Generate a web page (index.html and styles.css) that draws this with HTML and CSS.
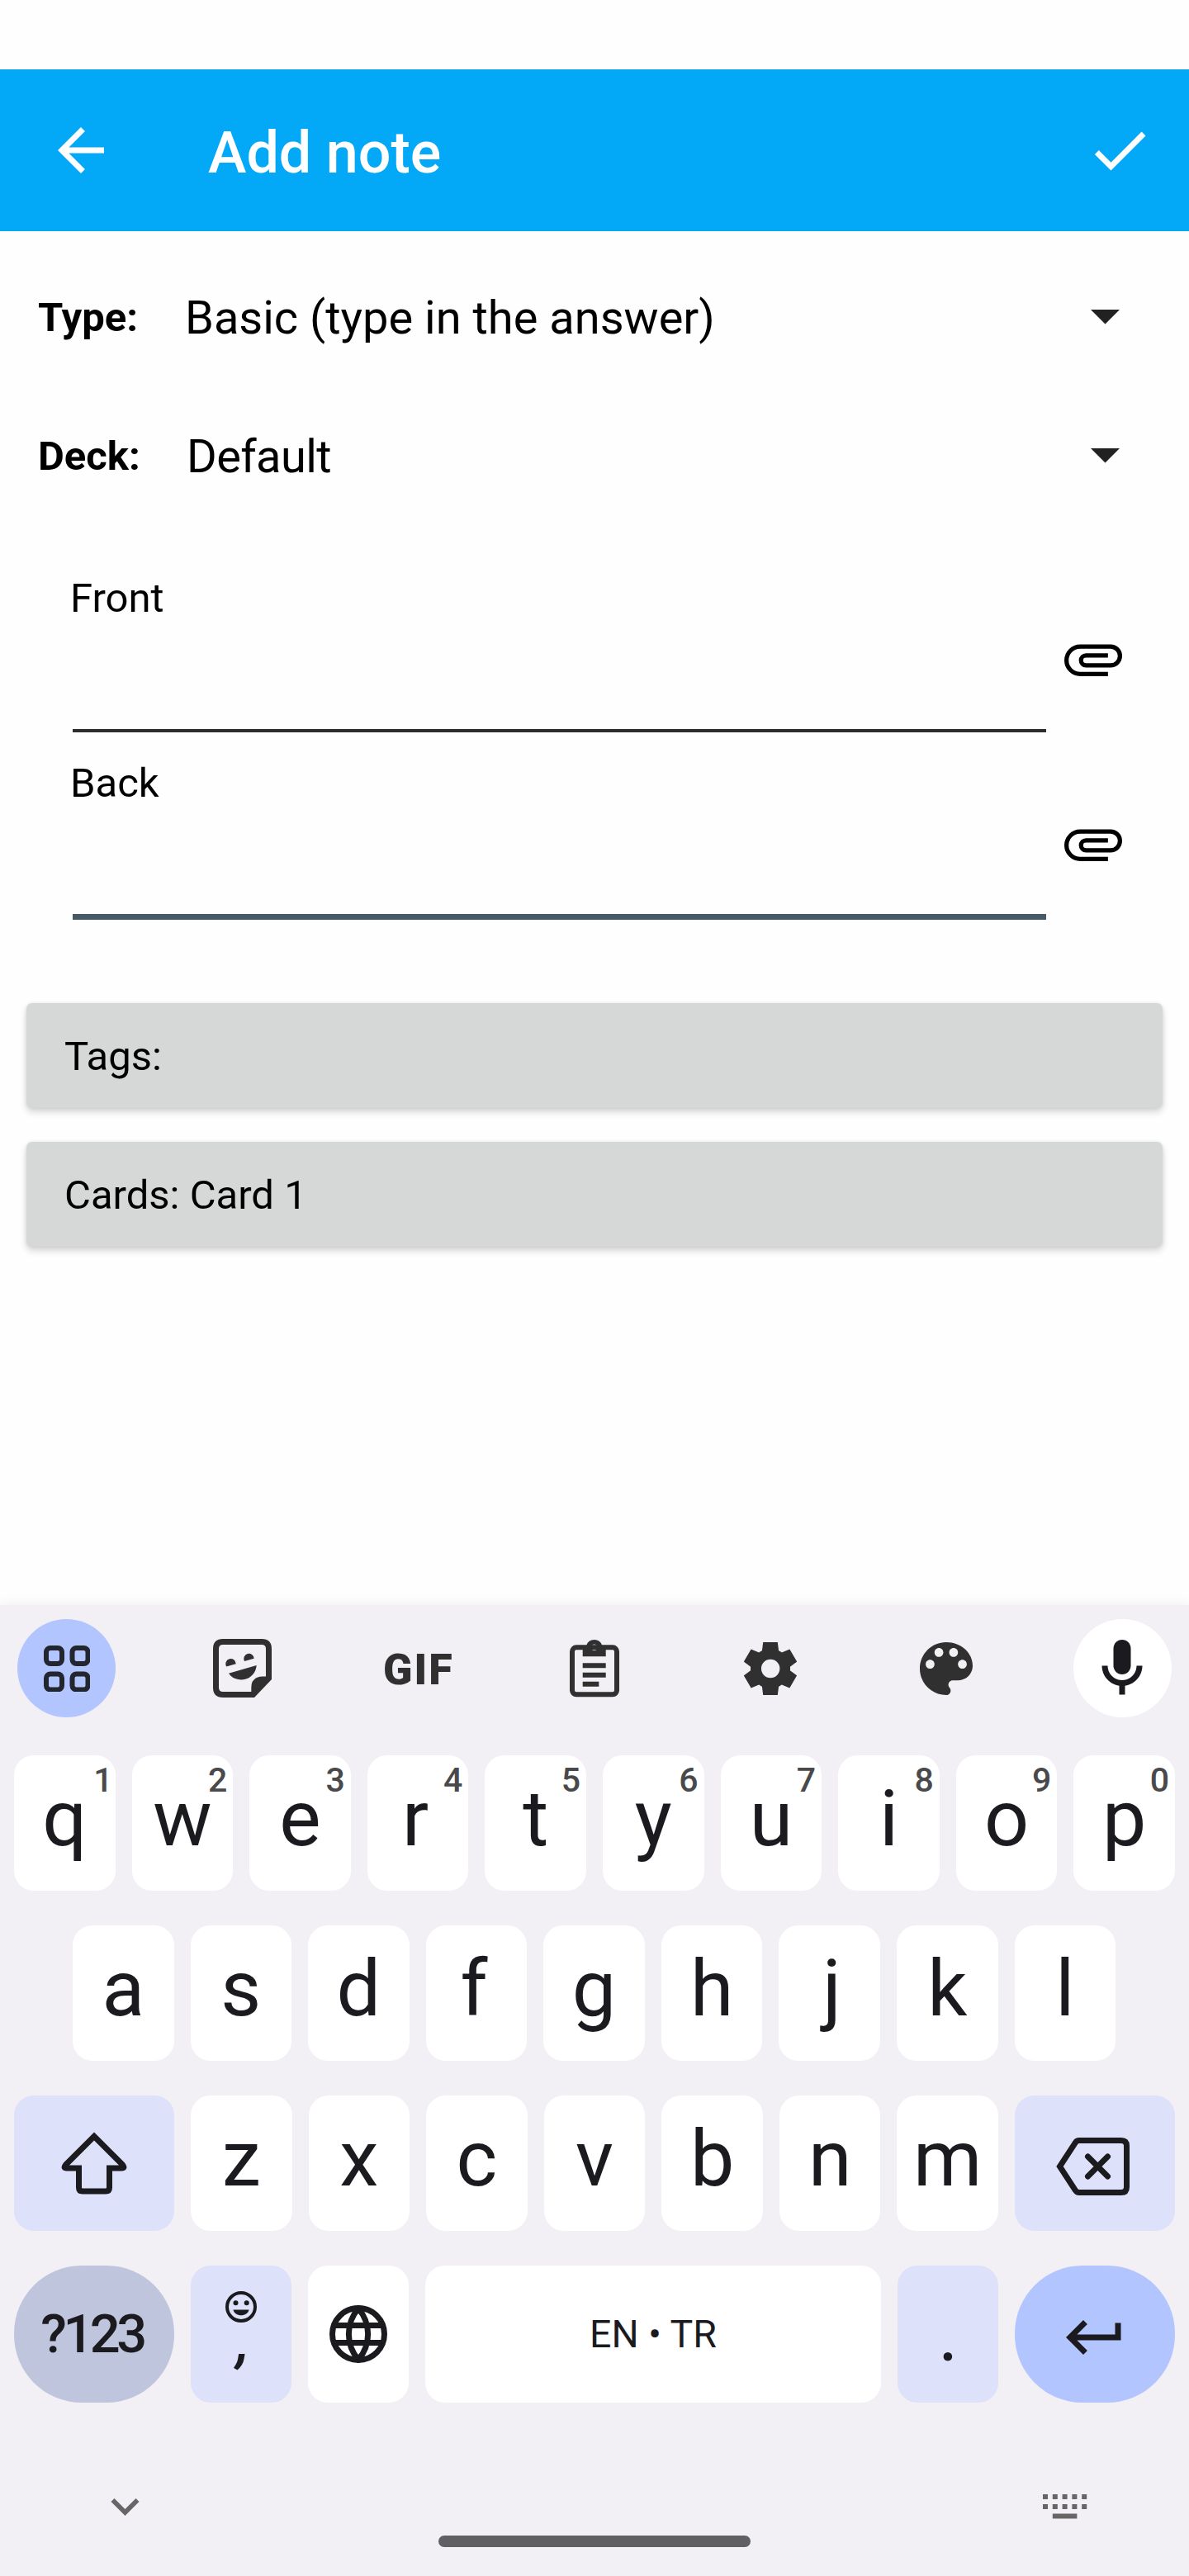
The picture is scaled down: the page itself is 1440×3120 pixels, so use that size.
FILE: index.html
```html
<!DOCTYPE html>
<html lang="en">
<head>
<meta charset="utf-8">
<title>Add note</title>
<link rel="stylesheet" href="styles.css">
</head>
<body>
<div class="screen">
  <header class="appbar">
    <svg class="icon back" viewBox="0 0 24 24"><path d="M20 11H7.83l5.59-5.59L12 4l-8 8 8 8 1.41-1.41L7.83 13H20z"/></svg>
    <h1 class="title">Add note</h1>
    <svg class="icon" viewBox="0 0 24 24"><path d="M9 16.2 4.8 12l-1.4 1.4L9 19 21 7l-1.4-1.4z"/></svg>
  </header>

  <main class="form">
    <div class="select-row">
      <span class="select-label">Type:</span>
      <span class="select-value">Basic (type in the answer)</span>
      <svg class="caret" viewBox="0 0 35 18"><path d="M0 0h35L17.5 17.5z"/></svg>
    </div>
    <div class="select-row deck">
      <span class="select-label">Deck:</span>
      <span class="select-value">Default</span>
      <svg class="caret" viewBox="0 0 35 18"><path d="M0 0h35L17.5 17.5z"/></svg>
    </div>

    <div class="fields">
      <div class="field">
        <div class="field-main"><span class="field-label">Front</span><div class="field-input"></div></div>
        <svg class="icon clip" viewBox="0 0 24 24"><path d="M17.100 17.250H7.500A4.750 4.750 0 0 1 7.500 7.750H18A3.250 3.250 0 0 1 18 14.250H9.500A1.725 1.725 0 0 1 9.500 10.800H17.100"/></svg>
      </div>
      <div class="field focused">
        <div class="field-main"><span class="field-label">Back</span><div class="field-input"></div></div>
        <svg class="icon clip" viewBox="0 0 24 24"><path d="M17.100 17.250H7.500A4.750 4.750 0 0 1 7.500 7.750H18A3.250 3.250 0 0 1 18 14.250H9.500A1.725 1.725 0 0 1 9.500 10.800H17.100"/></svg>
      </div>
    </div>

    <div class="buttons">
      <div class="button">Tags:</div>
      <div class="button">Cards: Card 1</div>
    </div>
  </main>

  <section class="keyboard">
    <div class="toolbar">
      <div class="tool tool-active">
        <svg width="56" height="56" viewBox="0 0 56 56" fill="none" stroke="#23252f" stroke-width="6"><rect x="3" y="3" width="19" height="19" rx="5"/><rect x="34.500" y="3" width="19" height="19" rx="5"/><rect x="3" y="34.500" width="19" height="19" rx="5"/><rect x="34.500" y="34.500" width="19" height="19" rx="5"/></svg>
      </div>
      <div class="tool">
        <svg width="71" height="71" viewBox="0 0 71 71"><path d="M67.500 47V12q0-8.500-8.500-8.500H12q-8.500 0-8.500 8.500v47q0 8.500 8.500 8.500H48" fill="none" stroke="#303030" stroke-width="7"/><path d="M71 49V45.500H60Q46.300 46 46.300 59V71H50z"/><path d="M16.300 33.500A6.200 6.200 0 1 1 27.700 30.300zM38 26.900A6.200 6.200 0 1 1 49.700 23.700zM19 41.700 52.700 32C52 43 43 49.500 34.500 49.500 28 49.500 22 46.500 19 41.700z"/></svg>
      </div>
      <div class="tool"><span class="gif">GIF</span></div>
      <div class="tool">
        <svg width="60" height="71" viewBox="0 0 60 71"><rect x="3" y="10.300" width="54" height="57" rx="5" fill="none" stroke="#303030" stroke-width="6"/><path fill-rule="evenodd" d="M15.700 8h4.500a10 10 0 0 1 19 0h4.500v13.300h-28zM29.700 6.600a3.700 3.700 0 1 0 .01 0z"/><path d="M15.700 29.300h28v6h-28zM15.700 40.700h28v6h-28zM15.700 51.800h19.600v6H15.700z"/></svg>
      </div>
      <div class="tool">
        <svg width="64" height="64" viewBox="2 2 20 20"><path d="m9.250 22-.4-3.200q-.325-.125-.612-.3-.288-.175-.563-.375L4.700 19.375l-2.750-4.750 2.575-1.950Q4.500 12.500 4.500 12.337v-.675q0-.162.025-.337L1.950 9.375l2.750-4.750 2.975 1.250q.275-.2.575-.375.3-.175.6-.3l.4-3.200h5.500l.4 3.200q.325.125.613.3.287.175.562.375l2.975-1.250 2.750 4.750-2.575 1.950q.025.175.025.337v.675q0 .163-.05.338l2.575 1.950-2.750 4.750-2.950-1.250q-.275.2-.575.375-.3.175-.6.3l-.4 3.200Zm2.800-6.500q1.450 0 2.475-1.025Q15.550 13.450 15.550 12q0-1.450-1.025-2.475Q13.500 8.500 12.050 8.500q-1.475 0-2.488 1.025Q8.550 10.550 8.550 12q0 1.450 1.012 2.475Q10.575 15.500 12.050 15.500Z"/></svg>
      </div>
      <div class="tool">
        <svg width="64" height="64" viewBox="3 3 18 18"><path d="M12 3c-4.970 0-9 4.030-9 9s4.030 9 9 9c.83 0 1.500-.67 1.500-1.500 0-.39-.15-.74-.39-1.010-.23-.26-.38-.61-.38-.99 0-.83.67-1.500 1.500-1.500H16c2.760 0 5-2.240 5-5 0-4.420-4.030-8-9-8zm-5.500 9c-.83 0-1.500-.67-1.500-1.500S5.670 9 6.500 9 8 9.670 8 10.500 7.330 12 6.500 12zm3-4C8.670 8 8 7.330 8 6.500S8.670 5 9.500 5s1.500.67 1.500 1.500S10.330 8 9.500 8zm5 0c-.83 0-1.500-.67-1.500-1.500S13.670 5 14.500 5s1.500.67 1.500 1.500S15.330 8 14.500 8zm3 4c-.83 0-1.500-.67-1.500-1.500S16.670 9 17.500 9s1.500.67 1.500 1.500-.67 1.500-1.500 1.500z"/></svg>
      </div>
      <div class="tool tool-mic">
        <svg width="84" height="84" viewBox="0 0 24 24"><path d="M12 14c1.660 0 3-1.340 3-3V5c0-1.660-1.340-3-3-3S9 3.340 9 5v6c0 1.660 1.340 3 3 3z"/><path d="M17 11c0 2.760-2.240 5-5 5s-5-2.240-5-5H5c0 3.530 2.610 6.430 6 6.920V21h2v-3.080c3.390-.49 6-3.390 6-6.920z"/></svg>
      </div>
    </div>

    <div class="rows">
      <div class="row">
        <div class="key">q<span class="hint hint-one">1</span></div>
        <div class="key">w<span class="hint">2</span></div>
        <div class="key">e<span class="hint">3</span></div>
        <div class="key key-left">r<span class="hint">4</span></div>
        <div class="key">t<span class="hint">5</span></div>
        <div class="key">y<span class="hint">6</span></div>
        <div class="key">u<span class="hint">7</span></div>
        <div class="key">i<span class="hint">8</span></div>
        <div class="key">o<span class="hint">9</span></div>
        <div class="key">p<span class="hint">0</span></div>
      </div>
      <div class="row row-inset">
        <div class="key">a</div><div class="key">s</div><div class="key">d</div><div class="key key-left">f</div><div class="key">g</div><div class="key">h</div><div class="key key-right">j</div><div class="key">k</div><div class="key">l</div>
      </div>
      <div class="row">
        <div class="key key-soft key-wide">
          <svg class="shift" width="80" height="76" viewBox="0 0 80 76" fill="none" stroke="#1b1b1f" stroke-width="7"><path d="M40 5.500 5.500 40Q2 44 7 44H21.500V67.500Q21.500 72 26 72H54Q58.500 72 58.500 67.500V44H73Q78 44 74.500 40z"/></svg>
        </div>
        <div class="key">z</div><div class="key">x</div><div class="key">c</div><div class="key">v</div><div class="key">b</div><div class="key">n</div><div class="key">m</div>
        <div class="key key-soft key-wide">
          <svg class="bksp" width="90" height="70" viewBox="0 0 90 70" fill="none" stroke="#1b1b1f" stroke-width="7"><path d="M4.500 35 23.500 6Q25 3.500 28 3.500H79Q85.500 3.500 85.500 10V60Q85.500 66.500 79 66.500H28Q25 66.500 23.500 64z"/><path d="M38.500 23 62.500 47M62.500 23 38.500 47" stroke-linecap="round"/></svg>
        </div>
      </div>
      <div class="row row-last">
        <div class="key key-symbols key-wide">?123</div>
        <div class="key key-soft key-comma">
          <svg width="38" height="38" viewBox="0 0 38 38"><circle cx="19" cy="19" r="17" fill="none" stroke="#1b1b1f" stroke-width="4"/><circle cx="12.500" cy="14.200" r="3"/><circle cx="25.700" cy="14.200" r="3"/><path d="M9.500 22.500h19c-1.500 9-17.500 9-19 0z"/></svg>
          <span class="comma">,</span>
        </div>
        <div class="key key-globe">
          <svg width="70" height="70" viewBox="0 0 70 70" fill="none" stroke="#1b1b1f" stroke-width="7"><circle cx="35" cy="35" r="31.500"/><path d="M5 24.500H65M5 45.500H65M35 4C19.500 22 19.500 48 35 66C50.500 48 50.500 22 35 4z"/></svg>
        </div>
        <div class="key key-space">EN • TR</div>
        <div class="key key-soft key-period">.</div>
        <div class="key key-enter key-wide">
          <svg class="enter" width="84" height="84" viewBox="0 0 24 24"><path d="M19 7v4H5.830l3.580-3.590L8 6l-6 6 6 6 1.410-1.410L5.830 13H21V7z"/></svg>
        </div>
      </div>
    </div>

    <div class="navbar">
      <svg class="hide" width="35" height="21" viewBox="6 8.590 12 7.410"><path d="M16.590 8.590 12 13.170 7.410 8.590 6 10l6 6 6-6z"/></svg>
      <div class="handle"></div>
      <svg class="switch" width="54" height="30" viewBox="0 0 54 30"><path d="M0 0h6v6H0zM11.800 0h6v6h-6zM23.600 0h6v6h-6zM35.400 0h6v6h-6zM47.200 0h6v6h-6zM0 12h6v6H0zM11.800 12h6v6h-6zM23.600 12h6v6h-6zM35.400 12h6v6h-6zM47.200 12h6v6h-6zM11.800 23.600h29.600v6H11.800z"/></svg>
    </div>
  </section>
</div>
</body>
</html>
```
FILE: styles.css
```css
* { box-sizing: border-box; }

body {
  margin: 0;
  background: #fff;
  font-family: Roboto, "Liberation Sans", sans-serif;
  color: #000;
}

svg { display: block; flex: none; }

.screen {
  display: flex;
  flex-direction: column;
  width: 1440px;
  height: 3120px;
  padding-top: 84px;
  background: #fefefe;
  overflow: hidden;
}

.icon { width: 84px; height: 84px; }

/* App bar */
.appbar {
  display: flex;
  align-items: center;
  height: 196px;
  padding: 0 42px 0 56px;
  background: #03a9f7;
  fill: #fff;
  color: #fff;
}
.title {
  flex: 1;
  margin: 0;
  padding: 6px 0 0 112px;
  font-size: 70px;
  font-weight: 500;
  line-height: 84px;
}

/* Form */
.form { padding-top: 20px; }
.select-row {
  display: flex;
  align-items: center;
  height: 168px;
  padding: 0 84px 0 46px;
}
.select-label {
  width: 178px;
  font-size: 49px;
  font-weight: 700;
}
.select-value { flex: 1; padding-top: 2px; font-size: 56px; }
.deck .select-label { width: 180px; }
.deck .select-value { letter-spacing: -.6px; }
.caret { width: 35px; height: 18px; fill: #212121; }

.fields { padding: 60px 0 0 88px; }
.field { display: flex; gap: 15px; height: 224px; }
.field-main { width: 1179px; }
.field-label {
  display: block;
  margin-left: -3px;
  font-size: 49px;
  line-height: 58px;
}
.field-input {
  height: 133px;
  border-bottom: 4px solid #2e2e2e;
}
.focused .field-input { height: 136px; border-bottom: 7px solid #455a64; }
.clip {
  margin-top: 60px;
  fill: none;
  stroke: #000;
  stroke-width: 1.5;
}

.buttons {
  display: flex;
  flex-direction: column;
  gap: 41px;
  padding: 71px 32px 0;
}
.button {
  height: 127px;
  padding: 3px 0 0 46px;
  border-radius: 7px;
  background: #d6d8d7;
  box-shadow: 0 5px 9px rgba(0, 0, 0, .16), 0 0 5px rgba(0, 0, 0, .08);
  font-size: 49px;
  line-height: 124px;
}

/* Keyboard */
.keyboard {
  display: flex;
  flex-direction: column;
  height: 1176px;
  margin-top: auto;
  padding-top: 17px;
  background: #f2f0f5;
  box-shadow: 0 0 14px rgba(0, 0, 0, .08);
  color: #1b1b1f;
  fill: #1b1b1f;
}
.toolbar {
  display: flex;
  justify-content: space-between;
  padding: 0 21px;
  fill: #303030;
}
.tool {
  display: flex;
  align-items: center;
  justify-content: center;
  width: 119px;
  height: 119px;
  border-radius: 50%;
}
.tool-active { background: #b2c5ff; }
.tool-mic { background: #fff; fill: #1b1b1f; }
.gif {
  padding-top: 3px;
  color: #303030;
  font-size: 52px;
  font-weight: 900;
  letter-spacing: 2px;
}

.rows {
  display: flex;
  flex-direction: column;
  gap: 42px;
  padding: 46px 17px 0;
}
.row { display: flex; gap: 20px; height: 164px; }
.row-last { height: 166px; }
.row-inset { padding: 0 72px 0 71px; }
.key {
  position: relative;
  display: flex;
  flex: 1 1 0;
  align-items: center;
  justify-content: center;
  padding-bottom: 11px;
  border-radius: 24px;
  background: #fff;
  font-size: 95px;
  line-height: 1;
}
.key-left { text-indent: -6px; }
.key-right { text-indent: 6px; }
.hint {
  position: absolute;
  top: 6px;
  right: 7px;
  color: #49494b;
  font-size: 41px;
  font-weight: 500;
  line-height: 48px;
  text-indent: 0;
}
.hint-one { right: 3px; }
.key-soft { background: #dde1f9; }
.key-wide { flex: none; width: 194px; padding: 0; }
.shift { margin-top: -1px; }
.bksp { margin: 7px 0 0 -4px; }
.key-symbols {
  padding-right: 5px;
  border-radius: 82px;
  background: #c0c5de;
  font-size: 65px;
  font-weight: 500;
  letter-spacing: -4.5px;
}
.key-comma {
  flex-direction: column;
  justify-content: flex-start;
  padding: 31px 0 0;
}
.comma {
  margin: -11px 0 0 5px;
  font-size: 68px;
  font-style: italic;
  font-weight: 600;
}
.key-globe { padding: 0; }
.key-space { flex: none; width: 552px; padding: 0; font-size: 46.5px; }
.key-period { padding: 0; font-family: Lato, sans-serif; font-size: 84px; }
.key-enter { border-radius: 82px; background: #b2c5ff; }
.enter { margin-top: 8px; }

.navbar {
  display: flex;
  justify-content: space-between;
  padding: 111px 123px 0 134px;
  fill: #666;
}
.hide { margin-top: 5px; }
.handle {
  width: 378px;
  height: 14px;
  margin: 50px 0 0 8px;
  border-radius: 7px;
  background: #606062;
}
```
